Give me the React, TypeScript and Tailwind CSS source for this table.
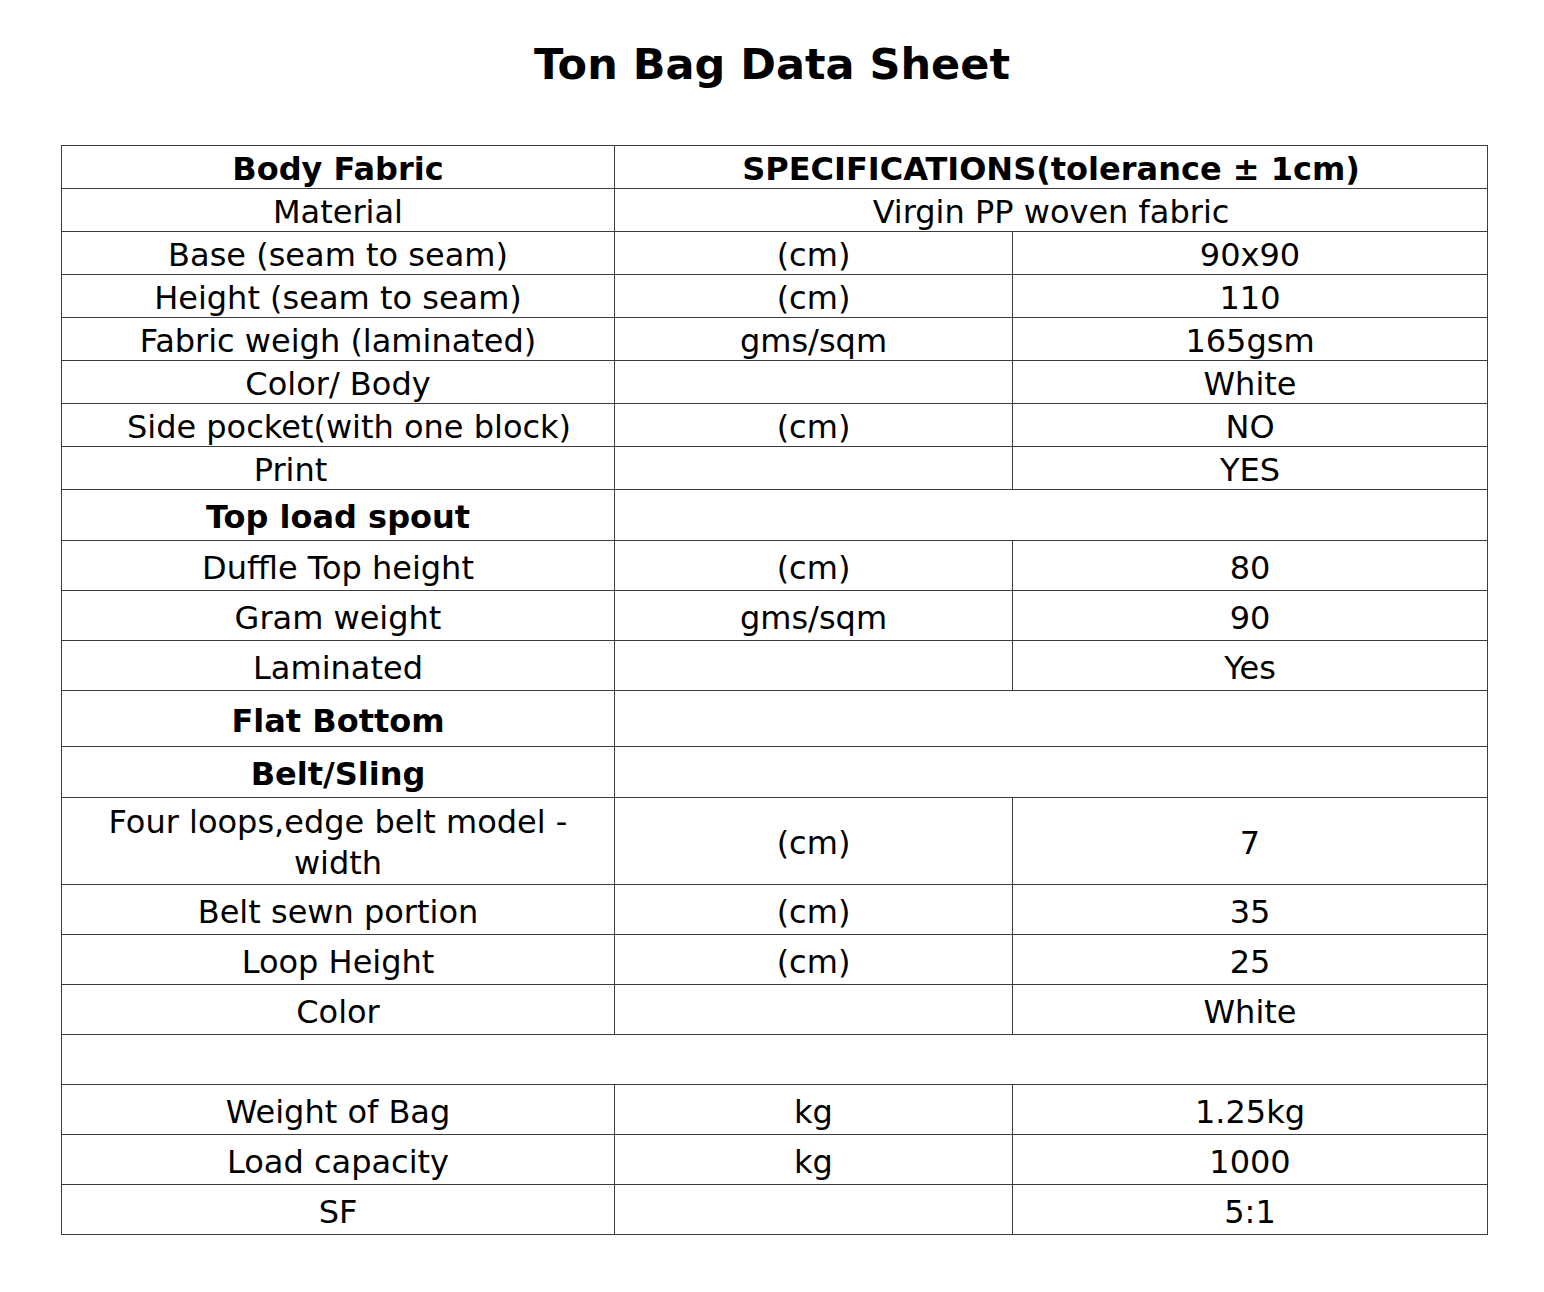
type Row = {
  label: string
  unit?: string
  value?: string
  span?: boolean
  bold?: boolean
  h: string
  labelClass?: string
}

const rows: Row[] = [
  { label: "Material", value: "Virgin PP woven fabric", span: true, h: "h-[43px]" },
  { label: "Base (seam to seam)", unit: "(cm)", value: "90x90", h: "h-[43px]" },
  { label: "Height (seam to seam)", unit: "(cm)", value: "110", h: "h-[43px]" },
  { label: "Fabric weigh (laminated)", unit: "gms/sqm", value: "165gsm", h: "h-[43px]" },
  { label: "Color/ Body", unit: "", value: "White", h: "h-[43px]" },
  { label: "Side pocket(with one block)", unit: "(cm)", value: "NO", h: "h-[43px]", labelClass: "pl-[22px]" },
  { label: "Print", unit: "", value: "YES", h: "h-[43px]", labelClass: "pr-[95px]" },
  { label: "Top load spout", bold: true, span: true, value: "", h: "h-[51px]" },
  { label: "Duffle Top height", unit: "(cm)", value: "80", h: "h-[50px]" },
  { label: "Gram weight", unit: "gms/sqm", value: "90", h: "h-[50px]" },
  { label: "Laminated", unit: "", value: "Yes", h: "h-[50px]" },
  { label: "Flat Bottom", bold: true, span: true, value: "", h: "h-[56px]" },
  { label: "Belt/Sling", bold: true, span: true, value: "", h: "h-[51px]" },
  {
    label: "Four loops,edge belt model - width",
    unit: "(cm)",
    value: "7",
    h: "h-[86px]",
    labelClass: "px-[36px] leading-[41px]",
  },
  { label: "Belt sewn portion", unit: "(cm)", value: "35", h: "h-[50px]" },
  { label: "Loop Height", unit: "(cm)", value: "25", h: "h-[50px]" },
  { label: "Color", unit: "", value: "White", h: "h-[50px]" },
]

const tail: Row[] = [
  { label: "Weight of Bag", unit: "kg", value: "1.25kg", h: "h-[50px]" },
  { label: "Load capacity", unit: "kg", value: "1000", h: "h-[50px]" },
  { label: "SF", unit: "", value: "5:1", h: "h-[50px]" },
]

const cell = "border border-[#3c3c3c] text-center align-middle pt-[4px] pb-0 px-0 leading-[36px]"

function DataRow({ row }: { row: Row }) {
  return (
    <tr className={row.h}>
      <td className={`${cell} ${row.bold ? "font-bold" : ""} ${row.labelClass ?? ""}`}>{row.label}</td>
      {row.span ? (
        <td colSpan={2} className={cell}>
          {row.value}
        </td>
      ) : (
        <>
          <td className={cell}>{row.unit}</td>
          <td className={cell}>{row.value}</td>
        </>
      )}
    </tr>
  )
}

export default function App() {
  return (
    <div className="min-h-[1292px] bg-white text-black font-['DejaVu_Sans',Verdana,sans-serif]">
      <h1 className="pt-[40px] text-center text-[43px] font-bold leading-[49px]">Ton Bag Data Sheet</h1>

      <table className="mt-[56px] ml-[61px] w-[1426px] table-fixed border-collapse text-[32px]">
        <colgroup>
          <col className="w-[553px]" />
          <col className="w-[398px]" />
          <col className="w-[475px]" />
        </colgroup>
        <tbody>
          <tr className="h-[43px]">
            <td className={`${cell} font-bold`}>Body Fabric</td>
            <td colSpan={2} className={`${cell} font-bold`}>
              SPECIFICATIONS(tolerance ± 1cm)
            </td>
          </tr>
          {rows.map((row) => (
            <DataRow key={row.label} row={row} />
          ))}
          <tr className="h-[50px]">
            <td colSpan={3} className={cell}></td>
          </tr>
          {tail.map((row) => (
            <DataRow key={row.label} row={row} />
          ))}
        </tbody>
      </table>
    </div>
  )
}
